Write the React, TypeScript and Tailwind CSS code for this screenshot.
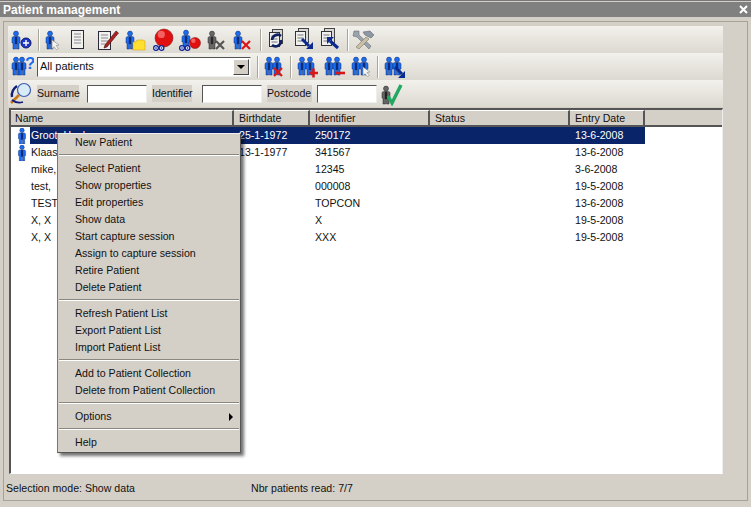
const font = "font-['Tahoma','Liberation_Sans',sans-serif]"

// one small person, the base of most of the toolbar icons
function Fig({ x = 0, y = 3, c = "#1c6cf0", d = "#0f2c70" }: { x?: number; y?: number; c?: string; d?: string }) {
  return (
    <g transform={`translate(${x} ${y})`}>
      <circle cx="5" cy="2.6" r="2.5" fill={c} stroke={d} strokeWidth="0.5" />
      <path d="M1 7 Q1 5.5 3 5.5 H7 Q9 5.5 9 7 V12 H8 V18 H5.5 V13 H4.5 V18 H2 V12 H1 Z" fill={c} stroke={d} strokeWidth="0.5" />
      <path d="M3.8 5.8 H6.2 V13 H3.8 Z" fill={d} />
    </g>
  )
}

function Ico({ children, className = "" }: { children: React.ReactNode; className?: string }) {
  return (
    <svg width="24" height="24" viewBox="0 0 24 24" className={`shrink-0 ${className}`}>
      {children}
    </svg>
  )
}

function RedX({ x, y, c = "#d81818" }: { x: number; y: number; c?: string }) {
  return <path d={`M${x} ${y} l8 8 M${x + 8} ${y} l-8 8`} stroke={c} strokeWidth="2.2" />
}

function Ball({ cx, cy, r }: { cx: number; cy: number; r: number }) {
  return (
    <g>
      <circle cx={cx} cy={cy} r={r} fill="#e01010" stroke="#701010" strokeWidth="0.5" />
      <circle cx={cx - r * 0.3} cy={cy - r * 0.4} r={r * 0.4} fill="#f46060" />
    </g>
  )
}

function Eyes({ x, y }: { x: number; y: number }) {
  return (
    <g>
      <circle cx={x} cy={y} r="2.4" fill="#e8ecff" stroke="#0a1f90" strokeWidth="1.2" />
      <circle cx={x} cy={y} r="0.8" fill="#0a1f90" />
      <circle cx={x + 5.5} cy={y} r="2.4" fill="#e8ecff" stroke="#0a1f90" strokeWidth="1.2" />
      <circle cx={x + 5.5} cy={y} r="0.8" fill="#0a1f90" />
    </g>
  )
}

function Doc({ x = 0, y = 0 }: { x?: number; y?: number }) {
  return (
    <g transform={`translate(${x} ${y})`}>
      <rect x="0.5" y="0.5" width="12" height="18" fill="#f0f0ec" stroke="#2a2a3a" />
      <path d="M3 4 H10 M3 7 H10 M3 10 H10 M3 13 H10" stroke="#8a8a92" />
    </g>
  )
}

function Stack({ x, y }: { x: number; y: number }) {
  return (
    <g transform={`translate(${x} ${y})`}>
      <rect x="3.5" y="0.5" width="10" height="14" fill="#d8d8d8" stroke="#444" />
      <rect x="0.5" y="3.5" width="10" height="14" fill="#f0f0f0" stroke="#333" />
      <path d="M2.5 7 H8.5 M2.5 10 H8.5 M2.5 13 H8.5" stroke="#777" />
    </g>
  )
}

function Cursor({ x, y }: { x: number; y: number }) {
  return <path d={`M${x} ${y} l7 5 l-3 .5 l2.5 3 l-2 1.2 l-2.5 -3 l-2 2 z`} fill="#f4f4f4" stroke="#8a8a8a" strokeWidth="0.6" />
}

function Pair() {
  return (
    <g>
      <Fig x={2} y={2} />
      <Fig x={10} y={2} />
    </g>
  )
}

function Sep({ className = "" }: { className?: string }) {
  return <div className={`w-[2px] h-[22px] shrink-0 border-l border-[#a8a59c] border-r-white border-r ${className}`} />
}

function Bar({ children }: { children: React.ReactNode }) {
  return <div className="h-[27px] flex items-center pl-[2px] bg-gradient-to-b from-[#f3f1ec] to-[#dcd9d1]">{children}</div>
}

function Field() {
  return <div className="w-[60px] h-[18px] bg-white border-t border-l border-[#555] border-b-[#eee] border-r-[#eee] border-b border-r shrink-0" />
}

const rows = [
  { name: "Groot, Henk", birth: "25-1-1972", id: "250172", date: "13-6-2008", fig: true, sel: true },
  { name: "Klaas", birth: "13-1-1977", id: "341567", date: "13-6-2008", fig: true },
  { name: "mike,", birth: "", id: "12345", date: "3-6-2008" },
  { name: "test,", birth: "", id: "000008", date: "19-5-2008" },
  { name: "TEST,", birth: "", id: "TOPCON", date: "13-6-2008" },
  { name: "X, X", birth: "", id: "X", date: "19-5-2008" },
  { name: "X, X", birth: "", id: "XXX", date: "19-5-2008" },
]

const heads = [
  { t: "Name", w: "w-[223px] pl-[4px]" },
  { t: "Birthdate", w: "w-[76px] pl-[5px]" },
  { t: "Identifier", w: "w-[120px] pl-[5px]" },
  { t: "Status", w: "w-[140px] pl-[5px]" },
  { t: "Entry Date", w: "w-[75px] pl-[5px]" },
]

function Item({ t, arrow }: { t: string; arrow?: boolean }) {
  return (
    <div className="h-[17px] flex items-center pl-[17px] pr-[7px] justify-between leading-none">
      <span>{t}</span>
      {arrow && <span className="w-0 h-0 border-y-[4px] border-y-transparent border-l-[4px] border-l-black" />}
    </div>
  )
}

function MenuSep() {
  return <div className="mt-[3px] mb-[4px] h-[2px] mx-[1px] border-t border-[#8a8780] border-b border-b-white" />
}

export default function App() {
  return (
    <div className={`relative w-[751px] h-[507px] overflow-hidden bg-[#d4d0c8] text-[10.6px] text-[#111] ${font}`}>
      <div className="h-[2px] bg-[#d4d0c8] border-t border-[#777]" />
      <div className="h-[15px] bg-[#808080] flex items-center justify-between pl-[3px] pr-[3px] text-white font-bold text-[12px]">
        <span>Patient management</span>
        <svg width="9" height="9" viewBox="0 0 9 9"><path d="M1 1 L8 8 M8 1 L1 8" stroke="#fff" strokeWidth="2" /></svg>
      </div>
      <div className="mx-[3px] mt-[4px] h-[480px] border border-[#a5a298] pt-[4px] pl-[4px] pr-[24px]">
        <Bar>
          <Ico><Fig x={1} /><circle cx="16" cy="15" r="5" fill="#2038c8" stroke="#0a1a70" /><path d="M13 15 H19 M16 12 V18" stroke="#fff" strokeWidth="1.4" /></Ico>
          <Sep className="ml-[4px]" />
          <Ico className="ml-[1px]"><Fig x={4} /><Cursor x={11} y={12} /></Ico>
          <Ico className="ml-[1px]"><Doc x={5} y={2} /></Ico>
          <Ico className="ml-[6px]"><Doc x={2} y={3} /><path d="M9 17 L20 3 L22.5 5 L11 19 L8 20 Z" fill="#b02020" stroke="#401010" strokeWidth="0.6" /></Ico>
          <Ico className="ml-[3px]"><Fig x={2} /><path d="M10 14 H13 L14 12 H20 L22 13 V22 H10 Z" fill="#ffe030" stroke="#d0a818" strokeWidth="0.6" /></Ico>
          <Ico className="ml-[4px]"><Ball cx={13} cy={10} r={9} /><Eyes x={5} y={20} /></Ico>
          <Ico className="ml-[3px]"><Fig x={3} y={2} /><Ball cx={17} cy={15} r={5.5} /><Eyes x={4} y={20} /></Ico>
          <Ico className="ml-[2px]"><Fig x={3} c="#666" d="#2a2a2a" /><RedX x={12} y={13} c="#555" /></Ico>
          <Ico className="ml-[3px]"><Fig x={2} /><RedX x={11} y={13} /></Ico>
          <Sep className="ml-[5px]" />
          <Ico className="ml-[3px]"><Stack x={4} y={1} /><path d="M7 12 A5.5 5.5 0 0 1 16 8 M16 12 A5.5 5.5 0 0 1 7 17" fill="none" stroke="#102060" strokeWidth="2.6" /></Ico>
          <Ico className="ml-[3px]"><Stack x={3} y={0} /><path d="M10 11 L17 18" stroke="#0a2a90" strokeWidth="3" /><path d="M21 14 V21 H14 Z" fill="#0a2a90" /></Ico>
          <Ico className="ml-[2px]"><Stack x={3} y={0} /><path d="M12 13 L20 20" stroke="#0a2a90" strokeWidth="3" /><path d="M9 9 H16 L9 16 Z" fill="#0a2a90" /></Ico>
          <Sep className="ml-[5px]" />
          <Ico className="ml-[2px]">
            <path d="M3 3 L8 3 L8 7 L20 18 L18 21 L6 9 L2 8 Z" fill="#9aa2ae" stroke="#6a7078" strokeWidth="0.6" />
            <path d="M15 9 L5 19 L8 21 L18 11 Z" fill="#c8bfa8" stroke="#807860" strokeWidth="0.6" />
            <path d="M12 4 L19 3 L23 7 L20 10 L16 8 L14 7 Z" fill="#8f97a4" stroke="#60666e" strokeWidth="0.6" />
          </Ico>
        </Bar>
        <Bar>
          <Ico><Fig x={1} y={2} /><Fig x={7} y={2} /><text x="15" y="14" fontSize="17" fontWeight="700" fill="#1c6cf0">?</text></Ico>
          <div className="ml-[3px] w-[214px] h-[20px] bg-white border-t border-l border-[#555] border-r border-b border-r-[#eee] border-b-[#eee] flex items-center justify-between pl-[2px] shrink-0">
            <span className="text-[11px]">All patients</span>
            <div className="w-[16px] h-[16px] mr-[1px] bg-[#d4d0c8] border border-t-white border-l-white border-r-[#444] border-b-[#444] flex items-center justify-center">
              <span className="w-0 h-0 border-x-[4px] border-x-transparent border-t-[4px] border-t-black" />
            </div>
          </div>
          <Sep className="ml-[6px]" />
          <Ico className="ml-[3px]"><Pair /><RedX x={12} y={13} /></Ico>
          <Sep className="ml-[4px]" />
          <Ico className="ml-[3px]"><Pair /><path d="M14 18 H23 M18.5 13.5 V22.5" stroke="#d81818" strokeWidth="2.6" /></Ico>
          <Ico className="ml-[3px]"><Pair /><path d="M13 18 H23" stroke="#d81818" strokeWidth="2.6" /></Ico>
          <Ico className="ml-[3px]"><Pair /><Cursor x={14} y={12} /></Ico>
          <Sep className="ml-[4px]" />
          <Ico className="ml-[3px]"><Pair /><path d="M13 12 L20 19" stroke="#0a2a90" strokeWidth="3" /><path d="M23 16 V23 H16 Z" fill="#0a2a90" /></Ico>
        </Bar>
        <Bar>
          <Ico className="ml-[-1px]">
            <circle cx="15" cy="8" r="6.5" fill="#d8ecf8" stroke="#3a5ab0" strokeWidth="1.2" />
            <path d="M8 4 Q2 8 3 15" fill="none" stroke="#12207a" strokeWidth="2.4" />
            <path d="M10 13 L2 21" stroke="#c87818" strokeWidth="2.6" />
            <path d="M3 18 Q8 22 14 20" fill="none" stroke="#12207a" strokeWidth="1.8" />
          </Ico>
          <span className="ml-[4px] mr-[8px] w-[42px] h-[17px] leading-[17px] bg-[#d4d0c8] shrink-0">Surname</span>
          <Field />
          <span className="ml-[5px] mr-[10px] w-[40px] h-[17px] leading-[17px] bg-[#d4d0c8] shrink-0">Identifier</span>
          <Field />
          <span className="ml-[5px] mr-[5px] w-[45px] h-[17px] leading-[17px] bg-[#d4d0c8] shrink-0">Postcode</span>
          <Field />
          <Ico className="ml-[4px]">
            <Fig x={0} y={4} c="#666" d="#222" />
            <path d="M7 14 L11 21 L20 3" fill="none" stroke="#22a860" strokeWidth="3.4" />
          </Ico>
        </Bar>
        <div className="mt-[1px] ml-[1px] h-[366px] bg-white border-t-2 border-l-2 border-[#555] border-r border-b border-r-[#eee] border-b-white">
          <div className="flex h-[17px] bg-[#d4d0c8] border-b-2 border-[#555]">
            {heads.map((h) => (
              <div key={h.t} className={`${h.w} shrink-0 leading-[15px] border-t border-white border-r-2 border-r-[#555]`}>{h.t}</div>
            ))}
          </div>
          {rows.map((r) => (
            <div key={r.id} className="flex h-[17px] leading-[17px]">
              <div className="w-[19px] pr-[3px] shrink-0 flex items-center justify-end">
                {r.fig && (
                  <svg width="10" height="16" viewBox="0 0 10 18"><Fig y={0} /></svg>
                )}
              </div>
              <div className={`flex ${r.sel ? "bg-[#0a246a] text-white" : ""}`}>
                <div className="w-[204px] pl-[1px] shrink-0">{r.name}</div>
                <div className="w-[76px] pl-[5px] shrink-0">{r.birth}</div>
                <div className="w-[120px] pl-[5px] shrink-0">{r.id}</div>
                <div className="w-[140px] shrink-0" />
                <div className="w-[75px] pl-[5px] shrink-0">{r.date}</div>
              </div>
            </div>
          ))}
        </div>
        <div className="mt-[7px] ml-[-2px] flex h-[16px] items-center">
          <span className="w-[245px]">Selection mode: Show data</span>
          <span>Nbr patients read: 7/7</span>
        </div>
      </div>

      {/* context menu over the list */}
      <div className="absolute left-[57px] top-[133px] w-[184px] bg-[#d4d0c8] border border-t-[#eee] border-l-[#777] border-r-[#555] border-b-[#555] pb-[1px] shadow-[3px_3px_3px_rgba(0,0,0,0.55)]">
        <Item t="New Patient" />
        <MenuSep />
        {["Select Patient", "Show properties", "Edit properties", "Show data", "Start capture session", "Assign to capture session", "Retire Patient", "Delete Patient"].map((t) => <Item key={t} t={t} />)}
        <MenuSep />
        {["Refresh Patient List", "Export Patient List", "Import Patient List"].map((t) => <Item key={t} t={t} />)}
        <MenuSep />
        {["Add to Patient Collection", "Delete from Patient Collection"].map((t) => <Item key={t} t={t} />)}
        <MenuSep />
        <Item t="Options" arrow />
        <MenuSep />
        <Item t="Help" />
      </div>
    </div>
  )
}
